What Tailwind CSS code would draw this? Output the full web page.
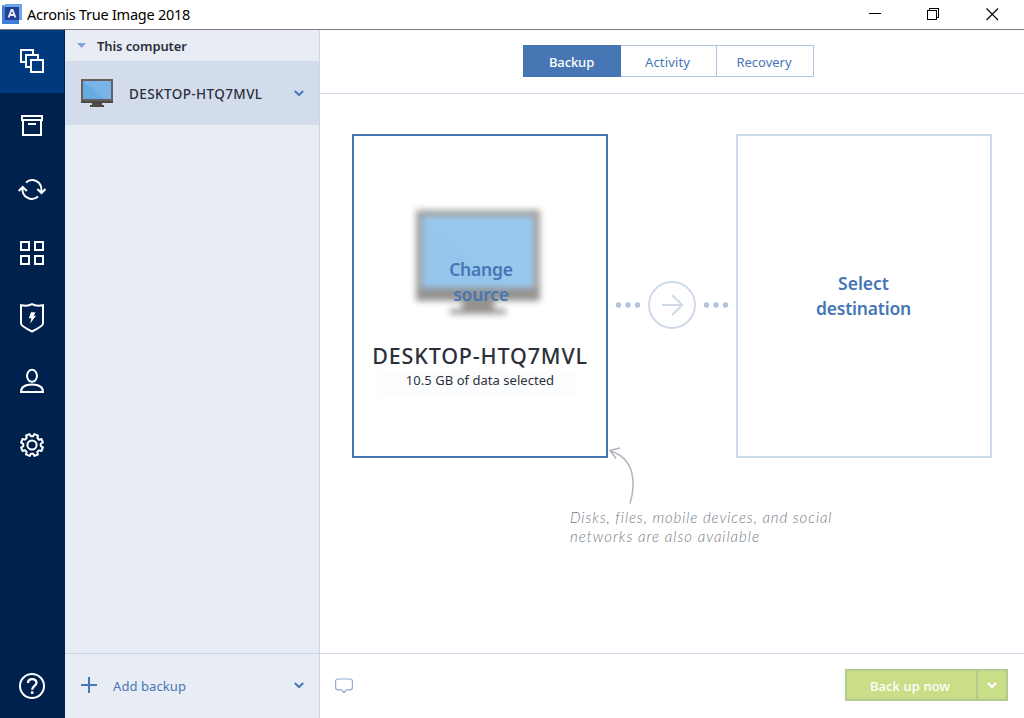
<!DOCTYPE html>
<html lang="en">
<head>
<meta charset="utf-8">
<title>Acronis True Image 2018</title>
<script src="https://cdn.jsdelivr.net/npm/@tailwindcss/browser@4"></script>
</head>
<body class="flex h-[718px] w-[1024px] flex-col overflow-hidden bg-white font-['Noto_Sans','Open_Sans',sans-serif] text-[13px] text-[#2b303b]">
<header class="flex h-[30px] shrink-0 items-center border-b border-[#7d7d7d] text-black">
  <svg class="-mt-[2px] ml-[2px]" width="20" height="20" viewBox="0 0 20 20"><rect width="16" height="19" y="1" fill="#5e96e0"/><rect x="3" width="17" height="16" fill="#6da4ec"/><rect x="0" y="3" width="17" height="17" fill="#3f7fdc"/><rect x="3" y="3" width="14" height="13" fill="#233f8f"/><path d="M6.500 13.500 9.500 6h1l3 7.500M7.800 11h4.500" fill="none" stroke="#e4edfa" stroke-width="1.900"/></svg>
  <h1 class="ml-[5px] text-[14.500px] tracking-[-0.260px] whitespace-nowrap">Acronis True Image 2018</h1>
  <svg class="ml-auto mr-[23px] -mt-[2px]" width="132" height="14" viewBox="0 0 132 14" fill="none" stroke="#000" shape-rendering="crispEdges"><path d="M0 6.500h12M58.500 3.500h9v9h-9zM60.500 3.500v-2h9v9h-2"/><path d="m117.500 1.500 11.500 11.500m0-11.500-11.500 11.500" stroke-width="1.100" shape-rendering="auto"/></svg>
</header>
<div class="flex min-h-0 flex-1">
  <nav class="flex w-[65px] shrink-0 flex-col bg-[#00214d] text-white">
    <div class="flex h-[63px] w-[64px] items-center justify-center bg-[#003a7d] pb-px"><svg width="32" height="32" viewBox="0 0 32 32" fill="none" stroke="currentColor" stroke-width="2"><path d="M9.500 17H5V5h12v4.500M14.500 22H10V10h12v4.500M15 15h12v12H15z"/></svg></div>
    <div class="flex h-16 w-16 items-center justify-center pt-[2px]"><svg width="32" height="32" viewBox="0 0 32 32" fill="none" stroke="currentColor" stroke-width="2"><path d="M6 6h20v4H6zM7 10v15h18V10M12 14h8"/></svg></div>
    <div class="flex h-16 w-16 items-center justify-center"><svg width="32" height="32" viewBox="0 0 32 32" fill="none" stroke="currentColor" stroke-width="2"><path d="M10 9.400A9.300 9.300 0 0 1 25.300 17.500V19.500M22 23.600A9.300 9.300 0 0 1 6.700 15V14M21.300 16l4.200 4 4-4M2.700 18l4-4 4.200 4"/></svg></div>
    <div class="flex h-16 w-16 items-center justify-center"><svg width="32" height="32" viewBox="0 0 32 32" fill="none" stroke="currentColor" stroke-width="2"><path d="M5 5h8v8H5zM19 5h8v8h-8zM5 19h8v8H5zM19 19h8v8h-8z"/></svg></div>
    <div class="flex h-16 w-16 items-center justify-center"><svg width="32" height="32" viewBox="0 0 32 32" fill="none" stroke="currentColor" stroke-width="2"><path d="M16 3.200C13.500 4.700 9 5 5 4.300V22.500q0 2.500 11 8 11-5.500 11-8V4.300C23 5 18.500 4.700 16 3.200z"/><path d="m15 11.200h4.500l-1.800 3.600h2.300l-5.800 7.700 1.200-5.200h-2.600z" fill="currentColor" stroke="none"/></svg></div>
    <div class="flex h-16 w-16 items-center justify-center"><svg width="32" height="32" viewBox="0 0 32 32" fill="none" stroke="currentColor" stroke-width="2"><ellipse cx="16" cy="10.800" rx="5" ry="6"/><path d="M5 27c0-5 4-7.500 11-7.500S27 22 27 27z"/></svg></div>
    <div class="flex h-16 w-16 items-center justify-center"><svg width="32" height="32" viewBox="0 0 32 32" fill="none" stroke="currentColor" stroke-width="2" stroke-linejoin="round"><circle cx="16" cy="16" r="4.600"/><path transform="rotate(22.500 16 16)" d="M13.700 7.500 14 5h4l.3 2.500 2.200.9 2-1.500 2.600 2.600-1.500 2 .9 2.200L27 14v4l-2.500.3-.9 2.200 1.500 2-2.600 2.600-2-1.500-2.200.9L18 27h-4l-.3-2.500-2.200-.9-2 1.500-2.600-2.600 1.500-2-.9-2.200L5 18v-4l2.500-.3.9-2.200-1.500-2 2.600-2.600 2 1.500z"/></svg></div>
    <div class="mt-auto flex h-16 w-16 items-center justify-center"><svg width="32" height="32" viewBox="0 0 32 32" fill="none" stroke="currentColor" stroke-width="2"><circle cx="16" cy="16" r="12"/><path d="M12 13c0-5.200 8.500-5 8.500-.3 0 3.300-4.300 3.200-4.300 7" stroke-width="2.300"/><path d="M16.200 21.300v2.600" stroke-width="2.600"/></svg></div>
  </nav>
  <aside class="flex w-[255px] shrink-0 flex-col border-r border-[#cad5e5] bg-[#e7ecf5]">
    <div class="flex h-[31px] items-center pl-[12px]"><svg width="9" height="5" viewBox="0 0 9 5"><path d="M0 0h9L4.500 5z" fill="#85a5d3"/></svg><span class="ml-[11px] text-[13px] leading-5 font-semibold tracking-[-0.100px]">This computer</span></div>
    <div class="flex h-[64px] items-center bg-[#d3dceb] pl-[16px]">
      <svg width="32" height="28" viewBox="0 0 32 28"><path d="M0 0h32v24H0z" fill="#65605e"/><path d="M0 22h32v2H0zM11 24h10v2h2v2H9v-2h2z" fill="#4d4947"/><path d="M2 2h28v18H2z" fill="#79b4e6"/><path d="M2 2 23 20H2z" fill="#66abe2"/></svg>
      <span class="ml-[16px] pt-[2px] text-[13.500px] font-medium tracking-[0.400px] whitespace-nowrap">DESKTOP-HTQ7MVL</span>
      <svg class="ml-auto mr-[15px]" width="10" height="7" viewBox="0 0 10 7"><path d="m.8 1 4.200 4L9.200 1" fill="none" stroke="#4877b8" stroke-width="2"/></svg>
    </div>
    <div class="mt-auto flex h-[65px] items-center border-t border-[#cad5e5] pl-[16px] text-[#4877b8]">
      <svg class="-mt-[2px]" width="16" height="16" viewBox="0 0 16 16"><path d="M8 0v16M0 8h16" stroke="currentColor" stroke-width="2"/></svg>
      <span class="ml-[16px] pt-[2px] text-[13px] tracking-[0.080px]">Add backup</span>
      <svg class="ml-auto mr-[15px] -mt-[2px]" width="10" height="7" viewBox="0 0 10 7"><path d="m.8 1 4.200 4L9.200 1" fill="none" stroke="currentColor" stroke-width="2"/></svg>
    </div>
  </aside>
  <main class="flex min-w-0 flex-1 flex-col">
    <div class="flex h-[64px] items-start border-b border-[#d0dae8] pt-[15px] pl-[203px] text-[#4877b8]">
      <div class="flex h-8 w-[98px] items-center justify-center bg-[#4776b5] pt-[3px] pr-px font-medium text-white"><span class="tracking-[-0.100px]">Backup</span></div>
      <div class="flex h-8 w-[95px] items-center justify-center border-y border-[#b1c4df] pt-[3px] pr-[2px]"><span class="tracking-[0.150px]">Activity</span></div>
      <div class="flex h-8 w-[98px] items-center justify-center border border-[#b1c4df] pt-[3px] pr-[2px]"><span>Recovery</span></div>
    </div>
    <div class="flex px-8 pt-10">
      <section class="relative flex h-[324px] w-[256px] flex-col items-center border-2 border-[#4776b5] pt-[66px]">
        <svg class="mr-[4px] opacity-70 blur-[3px]" width="132" height="120" viewBox="0 0 132 120"><path d="M4 8h124v91H4z" fill="#77736f"/><path d="M4 86h124v12H4zM50 98h32v9h12v5H38v-5h12z" fill="#686461"/><path d="M10 14h112v72H10z" fill="#70b2e6"/><path d="M10 14 96 86H10z" fill="#68ade4"/></svg>
        <p class="absolute top-[121px] left-[1px] w-full text-center text-[17.500px] leading-[25px] font-semibold text-[#4776b5]"><span class="tracking-[-0.200px]">Change</span><br><span class="tracking-[-0.200px]">source</span></p>
        <h2 class="mt-[19px] text-[21.500px] leading-[30px] font-medium tracking-[0.850px] whitespace-nowrap"><span>DESKTOP-HTQ7MVL</span></h2>
        <div class="mr-[5px] flex h-6 w-[201px] items-start justify-center bg-[#fcfdff] pl-[5px]"><span class="text-[13px] leading-[18px] tracking-[0.040px] whitespace-nowrap">10.5 GB of data selected</span></div>
      </section>
      <div class="flex w-[128px] items-center justify-center pt-[18px] pr-[4px]"><svg width="116" height="50" viewBox="0 0 116 50" fill="none"><g fill="#b1c4df"><circle cx="6.500" cy="25" r="2.700"/><circle cx="16" cy="25" r="2.700"/><circle cx="25.500" cy="25" r="2.700"/><circle cx="94.500" cy="25" r="2.700"/><circle cx="104" cy="25" r="2.700"/><circle cx="113.500" cy="25" r="2.700"/></g><circle cx="60" cy="25" r="23" stroke="#cfdbea" stroke-width="2"/><path d="M50 25h20M60 15l10.300 10L60 35" stroke="#cfdbea" stroke-width="2"/></svg></div>
      <section class="flex h-[324px] w-[256px] flex-col items-center border-2 border-[#cfdbea] pt-[135px]"><p class="pr-px text-center text-[17.500px] leading-[25px] font-semibold text-[#4776b5]"><span>Select</span><br><span class="tracking-[-0.200px]">destination</span></p></section>
    </div>
    <div class="-mt-[12px] pl-[250px] text-[#757c89]">
      <svg class="ml-[38px]" width="30" height="60" viewBox="0 0 30 60" fill="none" stroke="#b1b4bb" stroke-width="1.500"><path d="M22 57.500C28 37 27 12 2 5M12 2 2 4.500l6 8"/></svg>
      <p class="mt-[2px] font-['Segoe_Print','Lato',cursive] text-[15px] leading-[19px] font-light whitespace-nowrap italic"><span class="tracking-[0.900px]">Disks, files, mobile devices, and social</span><br><span class="tracking-[0.980px]">networks are also available</span></p>
    </div>
    <footer class="mt-auto flex h-[65px] items-center border-t border-[#d0dae8] pr-[16px] pl-[15px]">
      <svg width="18" height="16" viewBox="0 0 18 16" fill="none" stroke="#91add6" stroke-width="1.200"><path d="M3 1h12q2.400 0 2.400 2.400v6q0 2.400-2.400 2.400h-3.500L9 14.500l-2.500-2.700H3Q.600 11.800.600 9.400v-6Q.600 1 3 1z"/></svg>
      <div class="mb-[2px] ml-auto flex h-8 w-[163px] border-2 border-[#b0ca90] bg-[#c9de87] text-white"><div class="flex flex-1 items-center justify-center border-r-2 border-[#b0ca90] pt-[3px] pr-[3px] font-medium"><span class="tracking-[0.120px]">Back up now</span></div><div class="flex w-[28px] items-center justify-center"><svg width="10" height="7" viewBox="0 0 10 7"><path d="m.8 1 4.200 4L9.200 1" fill="none" stroke="currentColor" stroke-width="2"/></svg></div></div>
    </footer>
  </main>
</div>
</body>
</html>
